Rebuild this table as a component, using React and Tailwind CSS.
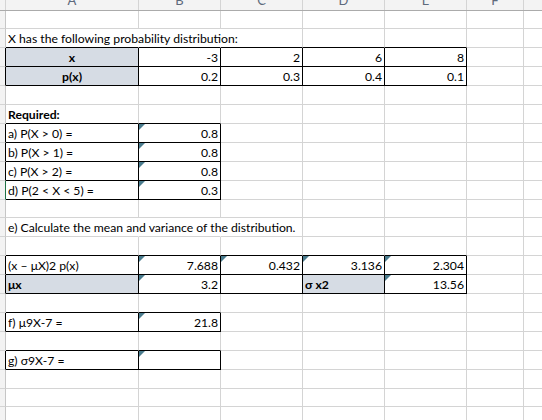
import React from 'react';

const WIDTHS = ['w-[6px]', 'w-[133px]', 'w-[82px]', 'w-[82px]', 'w-[82px]', 'w-[82px]', 'w-[57px]', 'flex-1'];
// G's letter sits past the window edge, so it is left out
const LETTERS = ['', 'A', 'B', 'C', 'D', 'E', 'F', ''];

// black bordered blocks: [rowFrom, rowTo, colFrom, colTo]
const BLOCKS = [
    [3, 4, 1, 5],
    [7, 10, 1, 2],
    [14, 15, 1, 5],
    [17, 17, 1, 2],
    [19, 19, 1, 2],
];

const inBlock = (r, c) => BLOCKS.some(([r1, r2, c1, c2]) => r >= r1 && r <= r2 && c >= c1 && c <= c2);

const num = (t, tri) => ({ t, right: true, tri });

const ROWS = [
    { h: 'h-[18px]' },
    { h: 'h-[19px]', spill: [1, 2], cells: { 1: { t: 'X has the following probability distribution:' } } },
    { h: 'h-[19px]', cells: { 1: { t: 'x', bold: true, center: true, shade: true }, 2: num('-3'), 3: num('2'), 4: num('6'), 5: num('8') } },
    { h: 'h-[19px]', cells: { 1: { t: 'p(x)', bold: true, center: true, shade: true }, 2: num('0.2'), 3: num('0.3'), 4: num('0.4'), 5: num('0.1') } },
    { h: 'h-[19px]' },
    { h: 'h-[19px]', cells: { 1: { t: 'Required:', bold: true } } },
    { h: 'h-[19px]', cells: { 1: { t: 'a) P(X > 0) =' }, 2: num('0.8', true) } },
    { h: 'h-[19px]', cells: { 1: { t: 'b) P(X > 1) =' }, 2: num('0.8', true) } },
    { h: 'h-[19px]', cells: { 1: { t: 'c) P(X > 2) =' }, 2: num('0.8', true) } },
    { h: 'h-[19px]', cells: { 1: { t: 'd) P(2 < X < 5) =' }, 2: num('0.3', true) } },
    { h: 'h-[18px]' },
    { h: 'h-[19px]', spill: [1, 2], cells: { 1: { t: 'e) Calculate the mean and variance of the distribution.' } } },
    { h: 'h-[19px]' },
    { h: 'h-[19px]', cells: { 1: { t: '(x – μX)2 p(x)' }, 2: num('7.688', true), 3: num('0.432', true), 4: num('3.136', true), 5: num('2.304', true) } },
    { h: 'h-[19px]', cells: { 1: { t: 'μx', bold: true, shade: true }, 2: num('3.2', true), 4: { t: 'σ x2', bold: true, shade: true }, 5: num('13.56', true) } },
    { h: 'h-[19px]' },
    { h: 'h-[19px]', cells: { 1: { t: 'f) μ9X-7 =' }, 2: num('21.8', true) } },
    { h: 'h-[19px]' },
    { h: 'h-[19px]', cells: { 1: { t: 'g) σ9X-7 =' }, 2: { t: '', tri: true } } },
    { h: 'h-[19px]' },
    { h: 'h-[18px]' },
    { h: 'h-[19px]' },
];

const Cell = ({ r, c, row }) => {
    const cell = (row.cells || {})[c];
    const spill = row.spill || [];

    let right = 'border-r-[#d4d4d4]';
    if (c === 0) right = r === 10 ? 'border-r-[#217346]' : 'border-r-[#c6c6c6]';
    if (c > 0 && (inBlock(r, c) || inBlock(r, c + 1))) right = 'border-r-black';
    else if (c === 0 && inBlock(r, 1) && r !== 10) right = 'border-r-black';
    if (spill.includes(c)) right = 'border-r-transparent';
    if (c === 7) right = 'border-r-0';

    let bottom = 'border-b-[#d4d4d4]';
    if (c > 0 && (inBlock(r, c) || inBlock(r + 1, c))) bottom = 'border-b-black';

    return (
        <div
            className={`relative box-border flex shrink-0 items-end border-r border-b px-[2px] pb-[1px] whitespace-nowrap ${WIDTHS[c]} ${right} ${bottom} ${c === 0 ? 'bg-[#f3f3f3]' : ''} ${cell?.shade ? 'bg-[#d6dce4]' : ''} ${cell?.right ? 'justify-end' : ''} ${cell?.center ? 'justify-center' : ''}`}
        >
            {cell?.tri && (
                <span className="absolute top-0 left-0 h-0 w-0 border-t-[6px] border-r-[6px] border-t-[#4a7c8e] border-r-transparent" />
            )}
            {cell && <span className={`leading-[15px] ${cell.bold ? 'font-bold' : ''}`}>{cell.t}</span>}
        </div>
    );
};

const App = () => {
    return (
        <div
            className="h-[420px] w-[542px] overflow-hidden bg-white text-[12.2px] text-black"
            style={{ fontFamily: 'Lato, "Noto Sans", sans-serif' }}
        >
            {/* column headers, tops cut off by the window */}
            <div className="flex h-[11px] border-b border-b-[#ababab] bg-[#f3f3f3]">
                {LETTERS.map((l, i) => (
                    <div
                        key={i}
                        className={`box-border flex shrink-0 items-end justify-center overflow-hidden border-r ${i === 7 ? 'border-r-0' : 'border-r-[#d4d4d4]'} ${i === 0 ? 'border-r-[#c6c6c6]' : ''} ${WIDTHS[i]}`}
                    >
                        <span className="mb-[3px] text-[13px] leading-[13px] text-[#5e6a7c]">{l}</span>
                    </div>
                ))}
            </div>

            {ROWS.map((row, i) => (
                <div key={i} className={`flex ${row.h}`}>
                    {WIDTHS.map((_, c) => (
                        <Cell key={c} r={i + 1} c={c} row={row} />
                    ))}
                </div>
            ))}
        </div>
    );
};

export default App;
